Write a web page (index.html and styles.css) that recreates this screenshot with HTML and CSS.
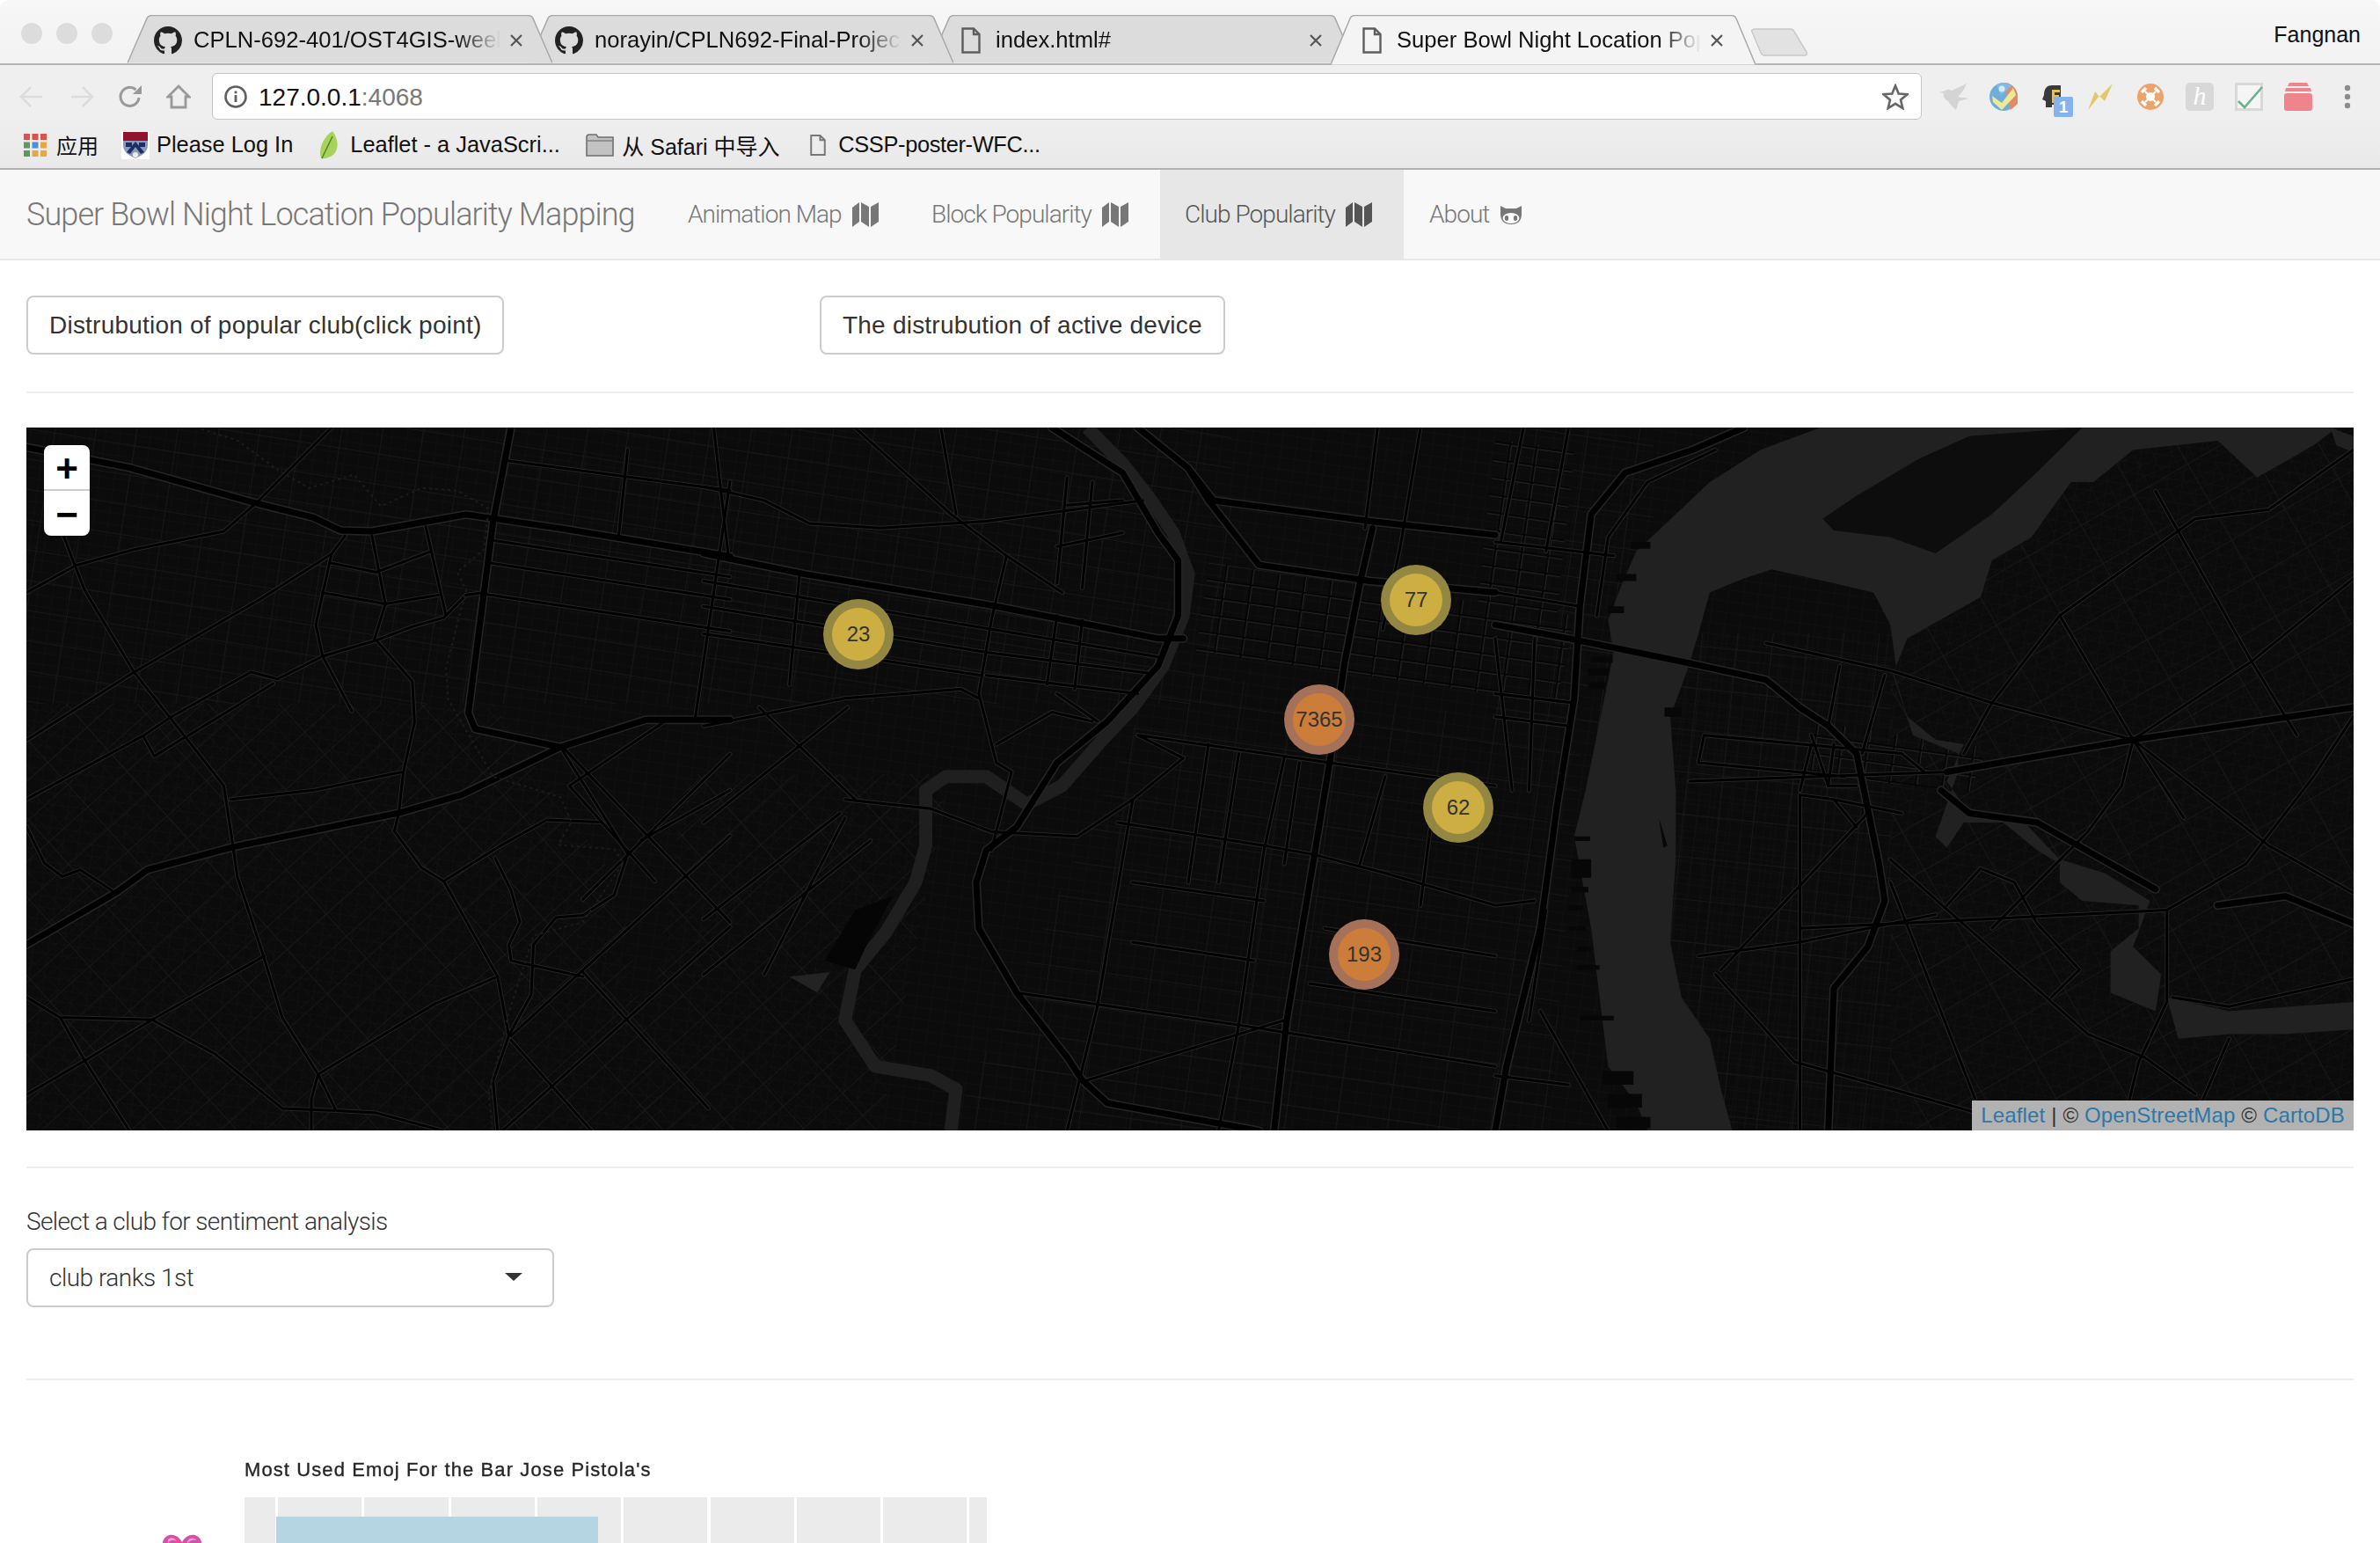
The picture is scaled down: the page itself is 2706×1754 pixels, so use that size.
FILE: index.html
```html
<!DOCTYPE html>
<html lang="en">
<head>
<meta charset="utf-8">
<title>Super Bowl Night Location Popularity Mapping</title>
<link rel="stylesheet" href="styles.css">
</head>
<body>
<svg class="sprites" width="0" height="0" aria-hidden="true">
  <defs>
    <symbol id="octo" viewBox="0 0 16 16"><path d="M8 0C3.58 0 0 3.58 0 8c0 3.54 2.29 6.53 5.47 7.59.4.07.55-.17.55-.38 0-.19-.01-.82-.01-1.49-2.01.37-2.53-.49-2.69-.94-.09-.23-.48-.94-.82-1.13-.28-.15-.68-.52-.01-.53.63-.01 1.08.58 1.23.82.72 1.21 1.87.87 2.33.66.07-.52.28-.87.51-1.07-1.78-.2-3.64-.89-3.64-3.95 0-.87.31-1.59.82-2.15-.08-.2-.36-1.02.08-2.12 0 0 .67-.21 2.2.82.64-.18 1.32-.27 2-.27.68 0 1.36.09 2 .27 1.53-1.04 2.2-.82 2.2-.82.44 1.1.16 1.92.08 2.12.51.56.82 1.27.82 2.15 0 3.07-1.87 3.75-3.65 3.95.29.25.54.73.54 1.48 0 1.07-.01 1.93-.01 2.2 0 .21.15.46.55.38A8.013 8.013 0 0016 8c0-4.42-3.58-8-8-8z"/></symbol>
    <symbol id="file" viewBox="0 0 22 30"><path d="M1.500 1.500H14L20.500 8V28.500H1.500Z M14 1.500V8H20.500" fill="none" stroke="currentColor" stroke-width="2.400"/></symbol>
    <symbol id="close" viewBox="0 0 16 16"><path d="M2 2L14 14M14 2L2 14" stroke="currentColor" stroke-width="2.200"/></symbol>
    <symbol id="fold" viewBox="0 0 30 30"><path d="M0 7 L8 1 V23 L0 29Z M10 1 L19 6 V29 L10 23Z M21 6 L30 1 V23 L21 29Z" fill="currentColor"/></symbol>
    <symbol id="tabshape" viewBox="0 0 483 57" preserveAspectRatio="none"><path d="M0 56.500L22 4C23 1.500 25 .5 28 .5H455C458 .5 460 1.500 461 4L483 56.500"/></symbol>
  </defs>
</svg>

<header class="browser">
  <div class="tabstrip">
    <div class="lights"><i></i><i></i><i></i></div>
    <div class="tabs">
      <div class="tab t1"><svg class="tabbg"><use href="#tabshape"/></svg><svg class="ticon"><use href="#octo"/></svg><span class="ttitle">CPLN-692-401/OST4GIS-week</span><svg class="tclose"><use href="#close"/></svg></div>
      <div class="tab t2"><svg class="tabbg"><use href="#tabshape"/></svg><svg class="ticon"><use href="#octo"/></svg><span class="ttitle">norayin/CPLN692-Final-Projec</span><svg class="tclose"><use href="#close"/></svg></div>
      <div class="tab t3"><svg class="tabbg"><use href="#tabshape"/></svg><svg class="ficon"><use href="#file"/></svg><span class="ttitle">index.html#</span><svg class="tclose"><use href="#close"/></svg></div>
      <div class="tab active"><svg class="tabbg"><use href="#tabshape"/></svg><svg class="ficon"><use href="#file"/></svg><span class="ttitle">Super Bowl Night Location Pop</span><svg class="tclose"><use href="#close"/></svg></div>
    </div>
    <svg class="newtab" viewBox="0 0 66 32"><path d="M6 1H46C48 1 49 2 50 4L64 27C65 29.500 64 31 62 31H16C14 31 13 30 12 28L2 4C1 2 3 1 6 1Z"/></svg>
    <span class="profile">Fangnan</span>
  </div>
  <div class="toolbar">
    <svg class="nb nb-back" viewBox="0 0 28 26"><path d="M26 13H3M13 2L2 13L13 24" fill="none" stroke="#dcdcdc" stroke-width="2.600"/></svg>
    <svg class="nb nb-fwd" viewBox="0 0 28 26"><path d="M2 13H25M15 2L26 13L15 24" fill="none" stroke="#dcdcdc" stroke-width="2.600"/></svg>
    <svg class="nb nb-reload" viewBox="0 0 28 28"><path d="M24 15A10.500 10.500 0 1 1 20.500 6" fill="none" stroke="#999" stroke-width="3"/><path d="M17 11H27V1Z" fill="#999"/></svg>
    <svg class="nb nb-home" viewBox="0 0 28 28"><path d="M2 14L14 2L26 14H22V26H6V14Z" fill="none" stroke="#999" stroke-width="2.800"/></svg>
    <div class="omnibox">
      <svg class="info" viewBox="0 0 26 26"><circle cx="13" cy="13" r="11.500" fill="none" stroke="#5f5f5f" stroke-width="2.600"/><rect x="11.600" y="11" width="2.800" height="8" fill="#5f5f5f"/><rect x="11.600" y="6.500" width="2.800" height="2.800" fill="#5f5f5f"/></svg>
      <span class="url">127.0.0.1<span class="port">:4068</span></span>
      <svg class="star" viewBox="0 0 30 30"><path d="M15 2.500L18.700 11.600L28.500 12.300L21 18.600L23.300 28L15 22.900L6.700 28L9 18.600L1.500 12.300L11.300 11.600Z" fill="none" stroke="#666" stroke-width="2.600"/></svg>
    </div>
    <div class="exts">
      <svg class="ext e-bird" viewBox="0 0 33 30"><path d="M0 10L7 8C9 6 12 7 14 8L31 0C28 8 24 12 21 15L33 17L22 20L19 30C15 27 12 23 10 20C6 18 4 14 5 11Z" fill="#d4d4d4"/></svg>
      <svg class="ext e-swarm" viewBox="0 0 32 32"><circle cx="16" cy="16" r="16" fill="#5aa3d6"/><path d="M16 0A16 16 0 0 1 32 16V24L24 31Z" fill="#e07a4f"/><path d="M16 0L26 3L13 14L8 3Z" fill="#6bb4e8"/><path d="M3 15L14 23L27 6L30 14L14 31L4 22Z" fill="#eee98a"/><circle cx="14" cy="7" r="3.500" fill="#d8e8f8"/></svg>
      <svg class="ext e-head" viewBox="0 0 36 38"><path d="M3 13C3 5 7 2 12 2H22V24H12V27H5V20L1 18Z" fill="#3a3a3a"/><path d="M12 7H21V10H15V13H20V16H15V22H12Z" fill="#e8c04c"/><rect x="14" y="15" width="22" height="23" rx="2" fill="#86b2ee"/><text x="25" y="33" class="badge-text">1</text></svg>
      <svg class="ext e-bolt" viewBox="0 0 28 30"><path d="M0 30L8 9L13 15L28 0L19 20L13 14Z" fill="#e3c86a"/></svg>
      <svg class="ext e-orange" viewBox="0 0 30 30"><circle cx="15" cy="15" r="15" fill="#eda46c"/><path d="M9 9L21 21M21 9L9 21" stroke="#fff" stroke-width="2.200"/><circle cx="15" cy="15" r="5" fill="#fff"/><path d="M5 10L10 5M20 5L25 10M5 20L10 25M20 25L25 20" stroke="#fff" stroke-width="3.200"/></svg>
      <div class="ext e-h">h</div>
      <svg class="ext e-check" viewBox="0 0 32 32"><rect x="1.500" y="1.500" width="29" height="29" fill="#f5f5f5" stroke="#d8d8d8" stroke-width="3"/><path d="M4 21L11 28L31 5" fill="none" stroke="#68b28c" stroke-width="2.600"/></svg>
      <svg class="ext e-stack" viewBox="0 0 32 32"><path d="M6 0H26L28 4H4Z" fill="#f0848c"/><path d="M2 6H30L31 10H1Z" fill="#f0848c"/><rect y="12" width="32" height="20" rx="3" fill="#f0848c"/></svg>
      <svg class="ext e-dots" viewBox="0 0 8 28"><circle cx="4" cy="4" r="3.200" fill="#8c8c8c"/><circle cx="4" cy="14" r="3.200" fill="#8c8c8c"/><circle cx="4" cy="24" r="3.200" fill="#8c8c8c"/></svg>
    </div>
  </div>
  <div class="bookmarks">
    <svg class="bi b-apps" viewBox="0 0 26 26"><rect width="7" height="7" fill="#d9534a"/><rect x="9.500" width="7" height="7" fill="#d9534a"/><rect x="19" width="7" height="7" fill="#d9534a"/><rect y="9.500" width="7" height="7" fill="#5a9a5c"/><rect x="9.500" y="9.500" width="7" height="7" fill="#4a90e2"/><rect x="19" y="9.500" width="7" height="7" fill="#e8a840"/><rect y="19" width="7" height="7" fill="#5a9a5c"/><rect x="9.500" y="19" width="7" height="7" fill="#e8a840"/><rect x="19" y="19" width="7" height="7" fill="#e8a840"/></svg>
    <span class="bl bl-apps">应用</span>
    <svg class="bi b-penn" viewBox="0 0 32 32"><rect width="32" height="32" fill="#fff"/><path d="M2 1H30V16C30 24 23 28 16 31C9 28 2 24 2 16Z" fill="#8c9bbd"/><rect x="2" y="1" width="28" height="10" fill="#95122c"/><path d="M16 12L26 24L22 26L16 18L10 26L6 24Z" fill="#1b2f63"/><circle cx="16" cy="27" r="3" fill="#eee"/><rect x="5" y="13" width="7" height="5" fill="#1b2f63"/><rect x="20" y="13" width="7" height="5" fill="#1b2f63"/></svg>
    <span class="bl bl-penn">Please Log In</span>
    <svg class="bi b-leaf" viewBox="0 0 22 32"><path d="M15 0C21 8 23 18 17 26C13 30 6 32 2 31C-1 22 3 8 15 0Z" fill="#a6d45a"/><path d="M3 31L15 6" stroke="#4f7d2c" stroke-width="1.400"/></svg>
    <span class="bl bl-leaf">Leaflet - a JavaScri...</span>
    <svg class="bi b-folder" viewBox="0 0 32 26"><path d="M1 4C1 2 2 1 4 1H12L14 4H31V25H1Z" fill="#c2c2c2" stroke="#6f6f6f" stroke-width="1.600"/><path d="M1 8H31" stroke="#7b7b7b" stroke-width="1.400"/></svg>
    <span class="bl bl-folder">从 Safari 中导入</span>
    <svg class="bi b-file"><use href="#file"/></svg>
    <span class="bl bl-cssp">CSSP-poster-WFC...</span>
  </div>
</header>

<nav class="navbar">
  <a class="brand">Super Bowl Night Location Popularity Mapping</a>
  <a class="navitem n-anim">Animation Map <svg class="nicon"><use href="#fold"/></svg></a>
  <a class="navitem n-block">Block Popularity <svg class="nicon"><use href="#fold"/></svg></a>
  <a class="navitem n-club is-active">Club Popularity <svg class="nicon"><use href="#fold"/></svg></a>
  <a class="navitem n-about">About <svg class="nicat" viewBox="0 0 26 24"><path d="M1 2L7 5H19L25 2V11C25 19 21 23 13 23C5 23 1 19 1 11Z" fill="#777"/><ellipse cx="13" cy="16" rx="9.500" ry="6" fill="#fff"/><ellipse cx="8" cy="16" rx="2.200" ry="3" fill="#777"/><ellipse cx="18" cy="16" rx="2.200" ry="3" fill="#777"/></svg></a>
</nav>

<main class="page">
  <div class="actions">
    <button class="btn">Distrubution of popular club(click point)</button>
    <button class="btn">The distrubution of active device</button>
  </div>
  <hr class="rule rule-a">
  <section class="map">
    <svg class="map-svg" viewBox="30 486 2646 799" preserveAspectRatio="none">
      <defs>
        <pattern id="gA" width="17" height="13" patternUnits="userSpaceOnUse" patternTransform="rotate(8)"><path class="fine" d="M0 0H17M0 0V13"/></pattern>
        <pattern id="gB" width="16" height="20" patternUnits="userSpaceOnUse" patternTransform="rotate(-42)"><path class="fine" d="M0 0H16M0 0V20"/></pattern>
        <pattern id="gC" width="13" height="18" patternUnits="userSpaceOnUse" patternTransform="rotate(6)"><path class="fine" d="M0 0H13M0 0V18"/></pattern>
        <pattern id="gD" width="20" height="13" patternUnits="userSpaceOnUse" patternTransform="rotate(-25)"><path class="fine" d="M0 0H20M0 0V13"/></pattern>
        <pattern id="stA" width="58" height="40" patternUnits="userSpaceOnUse" patternTransform="rotate(8)"><path class="street" d="M0 0H58M0 0V40"/></pattern>
        <pattern id="stB" width="60" height="34" patternUnits="userSpaceOnUse" patternTransform="rotate(-42)"><path class="street" d="M0 0H60M0 0V34"/></pattern>
        <pattern id="stC" width="46" height="34" patternUnits="userSpaceOnUse" patternTransform="rotate(9)"><path class="street" d="M0 0H46M0 0V34"/></pattern>
        <pattern id="stD" width="70" height="50" patternUnits="userSpaceOnUse" patternTransform="rotate(-30)"><path class="street" d="M0 0H70M0 0V50"/></pattern>
        <pattern id="stE" width="40" height="48" patternUnits="userSpaceOnUse" patternTransform="rotate(6)"><path class="street" d="M0 0H40M0 0V48"/></pattern>
        <pattern id="blocks" width="30" height="20" patternUnits="userSpaceOnUse" patternTransform="rotate(8)"><path class="blk-a" d="M0 0H30M0 0V20"/><path class="blk-b" d="M0 0H30M0 0V20"/></pattern>

        <g id="r-major">
          <g transform="translate(30 480) scale(.5102 .5165)">
            <path d="M0 55L230 100L500 175L640 210L700 238L770 240L980 203L1200 235L1568 295"/>
            <path d="M1080 12L1040 220L985 640L1000 675L1190 715L1380 655L1568 655"/>
            <path d="M0 1150L200 1035L270 985L460 935L830 860L970 820L1190 715"/>
          </g>
          <g transform="translate(800 480) scale(.5740 .5230)">
            <path d="M0 285L200 330L580 400L900 470L950 470"/>
            <path d="M690 12L830 110L900 240L940 300L940 420L900 530L800 650L700 740L620 880L560 930L540 1000L545 1100L620 1240L720 1380L750 1430L800 1480L1100 1540"/>
            <path d="M960 100L1000 170L1100 310L1320 345L1568 370"/>
            <path d="M1325 230L1300 350L1270 520L1240 740L1210 940L1155 1300L1130 1540"/>
            <path d="M860 12L960 100L1010 170L1320 215L1568 245"/>
          </g>
          <g transform="translate(1700 480) scale(.6418 .5230)">
            <path d="M0 440L130 470L330 520L480 560L540 620L590 660L640 720L660 840L680 960L690 1040L660 1140L600 1230L590 1540"/>
            <path d="M440 12L350 60L230 110L170 200L150 400L140 600L110 830L80 1100L20 1400L0 1540"/>
            <path d="M790 800L840 850L960 870L1170 1015"/>
            <path d="M800 760L1130 690L1520 620"/>
            <path d="M1280 1050L1400 1030L1520 1090"/>
          </g>
        </g>

        <g id="r-mid">
          <g transform="translate(30 480) scale(.5102 .5165)">
            <path d="M680 12L510 180L440 240L240 280L110 315L0 375"/>
            <path d="M75 230L110 320L130 370L240 550L320 650L440 800L460 930L470 1000L530 1180L570 1310L650 1435L690 1515"/>
            <path d="M0 700L240 550L520 390L680 290L710 250"/>
            <path d="M0 830L260 690L320 650L500 550L560 565L660 515L780 480L860 450L930 430L980 380L1020 375"/>
            <path d="M360 690L550 575M260 690L285 735L350 695"/>
            <path d="M770 250L800 400L775 480M680 290L645 445L660 515"/>
            <path d="M660 515L725 635"/>
            <path d="M780 480L860 570L865 660L840 770L830 860L820 900L880 980L930 1010L1050 1220L1075 1350L1040 1450L1050 1560"/>
            <path d="M660 375L800 400L920 380M680 310L780 330L900 285M890 230L935 425"/>
            <path d="M1190 715L1340 950L1310 1040L1240 1085L1180 1090L1130 1150L1125 1260L1075 1350"/>
            <path d="M455 830L640 810L835 770"/>
            <path d="M930 1010L1060 930L1160 875L1280 880"/>
            <path d="M530 1175L280 1315L75 1310L0 1265M280 1315L130 1405L0 1480M75 1310L130 1405L230 1560"/>
            <path d="M280 1315L420 1390L570 1510L690 1515L780 1520L930 1560"/>
            <path d="M650 1435L910 1280L1050 1220M650 1435L635 1490L635 1560"/>
            <path d="M1568 1110L1060 1560M1568 910L1080 1350M1200 720L1568 1100M1240 1210L1520 1510M1080 1360L1260 1560"/>
            <path d="M1040 260L1568 340M1035 310L1568 390M1020 378L1568 460M1075 85L1568 150"/>
            <path d="M1340 60L1320 250M1568 130L1490 655"/>
            <path d="M0 890L40 970L80 1000L120 985L190 1030M1045 960L1080 1030L1100 1100L1075 1150L1080 1185L1240 1220"/>
            <path d="M1568 730L1240 1050M1568 810L1370 920M1420 660L1210 800L1400 1010"/>
          </g>
          <g transform="translate(800 480) scale(.5740 .5230)">
            <path d="M0 140L120 170L210 220L350 230L560 215L870 170"/>
            <path d="M0 345L570 450L900 510M0 400L560 500M0 460L550 550"/>
            <path d="M600 290L570 430L545 590L580 740L610 760L570 930"/>
            <path d="M1150 730L1110 930L1060 1310L1020 1540M850 820L780 1270L720 1540"/>
            <path d="M1420 12L1380 270L1345 450M1335 12L1310 230"/>
            <path d="M820 870L1110 920L1210 940L1350 980L1568 1050"/>
            <path d="M620 1240L1060 1310L1568 1400M760 1430L1150 1300"/>
            <path d="M860 680L1240 740L1568 790M950 730L860 680"/>
            <path d="M0 660L280 600L510 580L545 600M280 820L450 840L570 890L740 900L850 820L950 730"/>
            <path d="M300 820L110 620M270 850L0 1080M330 910L0 1200M285 620L0 870M280 860L120 1200"/>
            <path d="M580 700L690 630L770 650M700 590L780 650"/>
            <path d="M300 12L490 200L600 290L710 370M20 12L50 300M470 12L500 200"/>
            <path d="M720 120L700 350M770 130L750 360M720 180L830 170M700 270L830 240"/>
            <path d="M190 330L170 570M700 420L680 570M750 430L735 580M560 500L880 545M560 550L860 590"/>
            <path d="M1000 700L960 1000M1060 720L1020 1000M1180 740L1150 960M1350 770L1300 960M1450 790L1420 1050"/>
            <path d="M850 1000L1110 1040M850 1130L1090 1170M1230 1100L1568 1160M1200 1220L1568 1280"/>
          </g>
          <g transform="translate(1700 480) scale(.6418 .5230)">
            <path d="M390 60L270 130L200 250L180 420M90 1060L60 1300"/>
            <path d="M0 260L210 290M0 370L150 400M50 12L10 260M130 12L90 280"/>
            <path d="M0 590L140 610M0 640L130 660M0 470L30 800M70 470L60 800"/>
            <path d="M370 680L720 720L760 760M370 680L360 740L620 770M345 780L800 760"/>
            <path d="M480 480L700 540L880 610L1130 690L1370 920L1530 1030"/>
            <path d="M880 610L830 720M880 610L1000 420L1240 210L1370 190L1520 60"/>
            <path d="M1000 420L1130 690L1110 790L1050 890L880 1100M1170 150L1340 520L1420 680M1130 690L1220 860"/>
            <path d="M1340 520L1130 690M1340 520L1520 340"/>
            <path d="M540 1100L1190 1060L1330 960L1450 770L1520 640"/>
            <path d="M1190 1060L1190 1260L1140 1390L1110 1540"/>
            <path d="M660 850L400 1190M700 950L1050 1330L1150 1380L1240 1460M700 1000L850 1470"/>
            <path d="M360 1160L540 1130L780 1070M800 1050L860 970L920 1000L960 1090L1035 1190L985 1250"/>
            <path d="M540 810L540 1540M390 1200L530 1390L850 1500"/>
            <path d="M1200 1250L1300 1270L1520 1210M1230 1540L1300 1340"/>
            <path d="M0 1050L70 1040M80 1280L200 1540M0 1420L130 1440"/>
            <path d="M610 530L590 660M690 550L650 720M560 700L540 800M600 700L590 790"/>
            <path d="M540 810L600 820L640 880M600 820L720 850M560 680L590 790L640 790"/>
          </g>
        </g>
      </defs>

      <rect class="land" x="30" y="486" width="2646" height="799"/>
      <rect class="g-a" x="30" y="486" width="2646" height="799"/>
      <path class="g-b" d="M30 800L560 800L700 1000L760 1285L30 1285Z"/>
      <path class="g-b" d="M780 880L1080 880L1000 1285L720 1285Z"/>
      <path class="g-c" d="M1860 720H2150V1285H1860Z"/>
      <path class="g-d" d="M2150 486H2676V1285H2150Z"/>
      <path class="st-c" d="M30 486H1400V800H30Z"/>
      <path class="st-b" d="M30 800L560 800L700 1000L760 1285L30 1285Z"/>
      <path class="st-b" d="M780 880L1080 880L1000 1285L720 1285Z"/>
      <path class="st-a" d="M1320 760L1800 830L1760 1285H1080Z"/>
      <path class="st-a" d="M1700 486H1880V830H1700Z"/>
      <path class="st-e" d="M1860 720H2150V1285H1860Z"/>
      <path class="st-d" d="M2150 486H2676V1285H2150Z"/>
      <path class="blocks" d="M1375 640L1790 700L1770 800L1360 740Z"/>
      <path class="blocks" d="M1700 500L1790 510L1770 700L1680 690Z"/>
      <path class="blocks" d="M2060 820L2260 850L2240 900L2050 880Z"/>

      <g class="water">
        <g transform="translate(1700 480) scale(.6418 .5230)">
          <path d="M575 12L470 60L380 130L320 200L250 280L225 350L200 430L210 500L190 620L160 800L140 900L170 1100L190 1300L200 1400L250 1480L270 1540L420 1540L400 1450L380 1340L330 1250L310 1130L320 950L320 800L310 640L340 540L360 460L380 370L440 340L490 320L600 350L670 370L700 440L710 530L730 470L860 380L880 300L950 250L1020 130L1060 130L1130 60L1280 40L1350 120L1450 50L1490 12Z"/>
          <path d="M1480 12L1520 30V65L1490 50Z"/>
          <path d="M700 530L740 680L820 720L820 760L780 900L800 925L830 870L900 870L960 930L1000 960L1000 1000L1040 1040L1140 1050L1140 1100L1090 1150L1090 1240L1170 1280L1180 1200L1130 1140L1160 1040L1080 980L1000 950L930 860L840 850L800 780L830 700L780 690L730 640L710 560Z"/>
          <path d="M1190 1250L1300 1280L1520 1260V1320L1400 1330L1300 1330L1210 1340Z"/>
        </g>
      </g>
      <path class="island" transform="translate(1700 480) scale(.6418 .5230)" d="M580 210L640 160L750 80L840 30L1040 12L950 120L880 200L780 285L700 250L600 235Z"/>
      <path class="piers" transform="translate(1700 480) scale(.6418 .5230)" d="M170 510H208V522H170ZM165 535H200V550H165ZM165 565H195V580H165ZM200 400H228V415H200ZM215 330H250V345H215ZM240 260H275V275H240ZM140 900H168V910H140ZM135 950H170V990H135ZM135 1010H165V1022H135ZM130 1050H155V1060H130ZM130 1095H160V1105H130ZM145 1140H170V1150H145ZM145 1180H185V1190H145ZM150 1290H210V1300H150ZM190 1410H245V1440H190ZM200 1460H260V1490H200ZM215 1510H275V1535H215ZM300 620H330V640H300ZM290 860L305 920L298 925Z"/>
      <path class="river" transform="translate(800 480) scale(.5740 .5230)" d="M760 12L830 90L880 160L930 240L960 330L950 420L910 530L850 620L790 690L710 790L640 830L560 770L480 770L440 800L440 920L420 1000L360 1110L300 1190L280 1300L340 1400L450 1420L500 1450L490 1540"/>
      <path class="water-fill" transform="translate(800 480) scale(.5740 .5230)" d="M170 1205L250 1195L225 1240Z"/>
      <path class="dark-blob" transform="translate(800 480) scale(.5740 .5230)" d="M300 1060L375 1030L330 1120L300 1190L240 1170Z"/>

      <use href="#r-major" class="cas-maj"/>
      <use href="#r-mid" class="cas-mid"/>
      <use href="#r-mid" class="core-mid"/>
      <use href="#r-major" class="core-maj"/>

      <path class="trail" transform="translate(30 480) scale(.5102 .5165)" d="M390 15L470 40L560 105L630 145L730 115L790 185L880 145L960 150L1030 190L1020 280L960 330L980 370L935 540L940 610L1040 780L1190 825L1215 880L1185 930L1310 940L1330 970L1240 1100L1130 1130L1075 1300L1030 1480L1040 1560"/>
    </svg>

    <div class="zoom-ctl">
      <a class="zoom-btn zoom-in">+</a>
      <a class="zoom-btn">−</a>
    </div>
    <div class="cluster c-y c23"><span>23</span></div>
    <div class="cluster c-y c77"><span>77</span></div>
    <div class="cluster c-o c7365"><span>7365</span></div>
    <div class="cluster c-y c62"><span>62</span></div>
    <div class="cluster c-o c193"><span>193</span></div>
    <div class="attrib"><a>Leaflet</a> | © <a>OpenStreetMap</a> © <a>CartoDB</a></div>
  </section>
  <hr class="rule rule-b">
  <label class="field-label">Select a club for sentiment analysis</label>
  <div class="select"><span>club ranks 1st</span><i class="caret"></i></div>
  <hr class="rule rule-c">
  <section class="chart">
    <div class="chart-title">Most Used Emoj For the Bar Jose Pistola's</div>
    <div class="axis">
      <svg class="heart" viewBox="0 0 48 40"><path d="M24 10C20 2 12 0 7 3C0 7 0 18 6 26L24 40L42 26C48 18 48 7 41 3C36 0 28 2 24 10Z" fill="#d84fa6"/><path d="M8 7C11 4 16 5 18 9C14 7 11 7 8 11Z" fill="#f3a6d6"/><path d="M30 9C33 4 38 5 41 8C38 7 34 7 30 11Z" fill="#f3a6d6"/></svg>
    </div>
    <div class="panel"><div class="bar"></div></div>
  </section>
</main>
</body>
</html>
```

FILE: styles.css
```css
* { box-sizing: border-box; }
html, body { margin: 0; padding: 0; }
body {
  width: 2706px;
  height: 1754px;
  overflow: hidden;
  background: #fff;
  font-family: "Liberation Sans", Arial, sans-serif;
  color: #333;
}
.sprites { position: absolute; }

/* browser chrome */
.browser { height: 193px; }
.tabstrip {
  height: 74px;
  display: flex;
  background: linear-gradient(#f7f7f7, #f2f2f2);
  border-bottom: 2px solid #b4b4b4;
  border-radius: 10px 10px 0 0;
}
.lights { width: 145px; display: flex; gap: 16px; padding: 26px 0 0 24px; }
.lights i { width: 24px; height: 24px; border-radius: 50%; background: #dcdcdc; }
.tabs { display: flex; padding-top: 17px; height: 74px; align-items: flex-start; }
.tab {
  position: relative;
  width: 483px;
  height: 55px;
  margin-right: -27px;
  display: flex;
  align-items: center;
  padding: 2px 0 0 30px;
  font-size: 25.6px;
  color: #111;
}
.t1 { z-index: 3; }
.t2 { z-index: 2; }
.t3 { z-index: 1; }
.tab.active { z-index: 5; height: 57px; padding-bottom: 2px; }
.tabbg { position: absolute; left: 0; top: 0; width: 100%; height: 100%; fill: #dcdcdc; stroke: #a9a9a9; stroke-width: 1.5px; }
.tab.active .tabbg { fill: #f4f4f4; }
.ticon { width: 32px; height: 32px; flex: none; position: relative; fill: #222; }
.ficon { width: 22px; height: 30px; flex: none; position: relative; margin-left: 6px; color: #5d5d5d; }
.ttitle {
  position: relative;
  margin-left: 13px;
  width: 349px;
  flex: none;
  white-space: nowrap;
  -webkit-mask-image: linear-gradient(90deg, #000 86%, transparent 100%);
  mask-image: linear-gradient(90deg, #000 86%, transparent 100%);
}
.ficon + .ttitle { margin-left: 17px; width: 346px; }
.tclose { position: relative; width: 16px; height: 16px; margin-left: 10px; flex: none; color: #555; }
.newtab { width: 66px; height: 32px; margin: 32px 0 0 21px; fill: #e2e2e2; stroke: #c8c8c8; stroke-width: 1.5; flex: none; }
.profile { margin-left: auto; padding: 25px 22px 0 0; font-size: 25px; color: #111; }

.toolbar {
  height: 61px;
  display: flex;
  align-items: center;
  padding: 2px 0 0 22px;
  background: #efefef;
}
.nb { flex: none; margin-top: 8px; }
.nb-back { width: 28px; height: 26px; }
.nb-fwd { width: 28px; height: 26px; margin-left: 29px; }
.nb-reload { width: 28px; height: 28px; margin-left: 27px; }
.nb-home { width: 28px; height: 28px; margin-left: 27px; }
.omnibox {
  width: 1944px;
  height: 53px;
  margin: 8px 0 0 24px;
  display: flex;
  align-items: center;
  background: #fff;
  border: 1.5px solid #c4c4c4;
  border-radius: 6px;
  padding: 0 14px 0 13px;
}
.info { width: 26px; height: 26px; }
.url { margin-left: 13px; padding-top: 2px; font-size: 28px; color: #111; }
.port { color: #777; }
.star { width: 30px; height: 30px; margin-left: auto; }
.exts { position: relative; flex: 1; display: flex; align-items: center; height: 53px; margin-top: 8px; padding-left: 20px; }
.ext { flex: none; }
.e-bird { width: 33px; height: 30px; }
.e-swarm { width: 32px; height: 32px; margin-left: 24px; opacity: .85; }
.e-head { width: 36px; height: 38px; margin: 8px 0 0 27px; }
.e-bolt { width: 28px; height: 30px; margin-left: 17px; }
.e-orange { width: 30px; height: 30px; margin-left: 28px; }
.e-h {
  width: 32px; height: 32px; margin-left: 25px;
  background: #d8d8d8; border-radius: 5px; color: #fff;
  font: italic 30px/30px "Liberation Serif", serif; text-align: center;
}
.e-check { width: 32px; height: 32px; margin-left: 24px; }
.e-stack { width: 32px; height: 32px; margin-left: 24px; }
.e-dots { width: 8px; height: 28px; margin-left: 36px; }
.badge-text { font: bold 19px "Liberation Sans", sans-serif; fill: #fff; text-anchor: middle; }

.bookmarks {
  height: 58px;
  display: flex;
  align-items: center;
  padding: 3px 0 0 27px;
  background: linear-gradient(#efefef, #e9e9e9);
  border-bottom: 2px solid #b0b0b0;
  font-size: 25.4px;
  color: #111;
  white-space: nowrap;
}
.bl { font-family: "Liberation Sans", "Noto Sans CJK SC", sans-serif; }
.b-apps { width: 26px; height: 26px; }
.bl-apps { margin-left: 11px; font-size: 24px; }
.b-penn { width: 32px; height: 32px; margin-left: 26px; }
.bl-penn { margin-left: 8px; }
.b-leaf { width: 22px; height: 32px; margin-left: 30px; }
.bl-leaf { margin-left: 13px; width: 239px; }
.b-folder { width: 32px; height: 26px; margin-left: 29px; }
.bl-folder { margin-left: 9px; width: 181px; font-size: 25px; }
.b-file { width: 18px; height: 26px; margin: 0 14px 0 33px; color: #777; }
.bl-cssp { letter-spacing: -.35px; }

/* site nav */
.navbar {
  height: 103px;
  display: flex;
  align-items: stretch;
  padding-left: 30px;
  background: #f8f8f8;
  border-bottom: 2px solid #e7e7e7;
  color: #777;
  font-family: Roboto, "Liberation Sans", sans-serif;
  font-weight: 300;
}
.brand { font-size: 36px; line-height: 103px; letter-spacing: -.9px; width: 722px; flex: none; white-space: nowrap; }
.navitem { display: flex; align-items: center; gap: 12px; font-size: 28px; letter-spacing: -.95px; white-space: nowrap; flex: none; }
.n-anim { padding-left: 30px; width: 276px; }
.n-block { padding-left: 31px; width: 291px; }
.n-club { padding-left: 28px; width: 277px; }
.n-about { padding-left: 29px; }
.is-active { background: #e7e7e7; color: #555; }
.nicon { width: 30px; height: 30px; color: #777; flex: none; }
.is-active .nicon { color: #555; }
.nicat { width: 26px; height: 24px; }

/* page */
.page { padding: 40px 30px 0; }
.actions { display: grid; grid-template-columns: 902px auto; justify-items: start; }
.btn {
  height: 67px;
  padding: 0 24px;
  background: #fff;
  border: 2px solid #ccc;
  border-radius: 8px;
  font: 28px "Liberation Sans", Arial, sans-serif;
  letter-spacing: .22px;
  color: #333;
  white-space: nowrap;
}
.rule { border: 0; height: 2px; background: #eee; margin: 0; }
.rule-a { margin: 42px 0 39px; }
.rule-b { margin: 41px 0 0; }
.rule-c { margin: 81px 0 0; }

.map { position: relative; height: 799px; overflow: hidden; background: #0b0b0b; }
.map-svg { display: block; width: 100%; height: 100%; }
.map-svg path { vector-effect: non-scaling-stroke; }
.land { fill: #0b0b0b; }
.fine { fill: none; stroke: #141414; stroke-width: 1; }
.street { fill: none; stroke: #1a1a1a; stroke-width: 1.6; }
.blk-a { fill: none; stroke: #242424; stroke-width: 6; }
.blk-b { fill: none; stroke: #020202; stroke-width: 3.5; }
.g-a { fill: url(#gA); }
.g-b { fill: url(#gB); }
.g-c { fill: url(#gC); }
.g-d { fill: url(#gD); }
.st-a { fill: url(#stA); }
.st-b { fill: url(#stB); }
.st-c { fill: url(#stC); }
.st-d { fill: url(#stD); }
.st-e { fill: url(#stE); }
.blocks { fill: url(#blocks); }
.water { fill: #212121; }
.water-fill { fill: #232323; }
.island { fill: #0d0d0d; }
.piers { fill: #070707; }
.dark-blob { fill: #050505; }
.river { fill: none; stroke: #1f1f1f; stroke-width: 15; stroke-linejoin: round; }
.cas-maj, .core-maj, .cas-mid, .core-mid { fill: none; stroke-linejoin: round; stroke-linecap: round; }
.cas-maj { stroke: #252525; stroke-width: 10; }
.core-maj { stroke: #000; stroke-width: 7; }
.cas-mid { stroke: #252525; stroke-width: 5; }
.core-mid { stroke: #000; stroke-width: 3; }
.trail { fill: none; stroke: #1c1c1c; stroke-width: 2; stroke-dasharray: 3 4; }

.zoom-ctl {
  position: absolute;
  left: 20px;
  top: 20px;
  width: 52px;
  background: #fff;
  border-radius: 8px;
  overflow: hidden;
}
.zoom-btn {
  display: flex;
  align-items: center;
  justify-content: center;
  height: 51.5px;
  padding-top: 4px;
  font: bold 44px "Liberation Sans", sans-serif;
  color: #000;
}
.zoom-in { border-bottom: 2px solid #ccc; }

.cluster {
  position: absolute;
  width: 80px;
  height: 80px;
  border-radius: 50%;
  display: flex;
  align-items: center;
  justify-content: center;
  font-size: 24px;
  color: #333;
}
.cluster span {
  width: 60px;
  height: 60px;
  line-height: 60px;
  border-radius: 50%;
  text-align: center;
}
.c-y { background: #948741; }
.c-y span { background: #cdae42; }
.c-o { background: #a67159; }
.c-o span { background: #cc7d3a; }
.c23 { left: 906px; top: 195px; }
.c77 { left: 1540px; top: 156px; }
.c7365 { left: 1430px; top: 292px; }
.c62 { left: 1588px; top: 392px; }
.c193 { left: 1481px; top: 559px; }

.attrib {
  position: absolute;
  right: 0;
  bottom: 0;
  height: 34px;
  line-height: 34px;
  padding: 0 10px;
  background: #b2b2b2;
  font-size: 24px;
  letter-spacing: .15px;
  color: #333;
  white-space: nowrap;
}
.attrib a { color: #2d78a8; }

.field-label {
  display: block;
  margin-top: 44px;
  font: 300 28px/33px Roboto, "Liberation Sans", sans-serif;
  letter-spacing: -.63px;
  color: #333;
}
.select {
  width: 600px;
  height: 67px;
  margin-top: 14px;
  padding: 0 24px;
  display: flex;
  align-items: center;
  justify-content: space-between;
  border: 2px solid #ccc;
  border-radius: 8px;
  font: 300 28px Roboto, "Liberation Sans", sans-serif;
  letter-spacing: -.5px;
  color: #333;
}
.caret {
  width: 0;
  height: 0;
  margin: -2px 10px 0 0;
  border: solid transparent;
  border-width: 9px 10px 0;
  border-top-color: #333;
}

.chart {
  display: grid;
  grid-template-columns: 248px 844px;
  grid-template-rows: 61px 52px;
  margin-top: 72px;
  height: 187px;
  overflow: hidden;
}
.chart-title {
  grid-column: 2;
  font-size: 22px;
  line-height: 26px;
  letter-spacing: 1.1px;
  color: #222;
  -webkit-text-stroke: .35px #333;
  filter: blur(.6px);
  white-space: nowrap;
  padding-top: 17px;
  height: 55px;
}
.axis { grid-column: 1; grid-row: 2; padding: 41px 0 0 153px; }
.heart { display: block; width: 48px; height: 40px; }
.panel {
  grid-column: 2;
  grid-row: 2;
  height: 52px;
  padding: 22px 0 0 36px;
  background-color: #ebebeb;
  background-image: repeating-linear-gradient(90deg, #fff 0 3px, transparent 3px 98.3px);
  background-position: 35px 0;
  overflow: hidden;
}
.bar { width: 366px; height: 60px; background: #b4d5e1; }
```
